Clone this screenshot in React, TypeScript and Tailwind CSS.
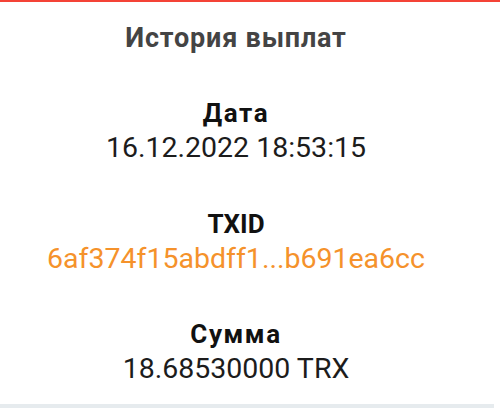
export default function App() {
  const rows = [
    { label: "Дата", value: "16.12.2022 18:53:15", accent: false, cyr: true },
    { label: "TXID", value: "6af374f15abdff1...b691ea6cc", accent: true, cyr: false },
    { label: "Сумма", value: "18.68530000 TRX", accent: false, cyr: true },
  ];

  return (
    <div className="h-[412px] w-[500px] bg-white font-['Roboto','Noto_Sans',sans-serif] relative overflow-hidden">
      <div className="h-[2px] w-full bg-[#f44336]" />
      <div className="w-[472px] flex flex-col items-center text-center">
        <h1 className="mt-[20px] text-[27px] leading-[32px] tracking-[0.03em] font-bold text-[#444444]">
          История выплат
        </h1>
        <div className="mt-[42px] flex flex-col gap-[41.5px]">
          {rows.map((r) => (
            <div key={r.label} className="flex flex-col items-center">
              <div
                className={
                  r.cyr
                    ? "text-[26px] leading-[35px] tracking-[0.06em] font-bold text-[#111111]"
                    : "text-[26px] leading-[35px] font-bold text-[#111111]"
                }
              >
                {r.label}
              </div>
              <div
                className={
                  r.accent
                    ? "text-[28.5px] leading-[34px] text-[#f5922b]"
                    : "text-[28.5px] leading-[34px] text-[#1c1c1c]"
                }
              >
                {r.value}
              </div>
            </div>
          ))}
        </div>
      </div>
      <div className="absolute left-0 top-[404px] h-[4px] w-[494px] bg-[#e6ebee]" />
    </div>
  );
}
